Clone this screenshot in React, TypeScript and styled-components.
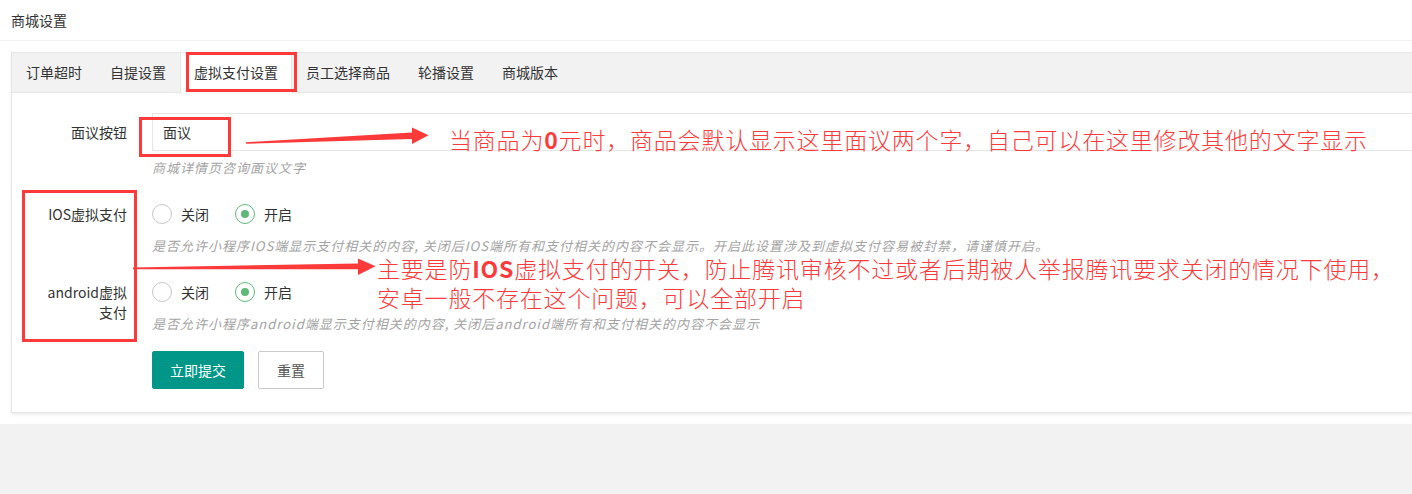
import React from "react";
import styled, { createGlobalStyle } from "styled-components";

const GlobalStyle = createGlobalStyle`
  html, body {
    margin: 0;
    padding: 0;
    background: #f2f2f2;
    overflow: hidden;
  }
  body {
    font-family: "Noto Sans CJK SC", "Noto Sans", "Liberation Sans", sans-serif;
    font-size: 14px;
    color: #333;
  }
  * {
    box-sizing: border-box;
  }
`;

const Page = styled.div`
  position: relative;
  width: 1440px;
  background: #fff;
  padding-bottom: 11px;
`;

const Header = styled.div`
  height: 41px;
  line-height: 40px;
  padding: 0 11px;
  font-size: 14px;
  color: #333;
  border-bottom: 1px solid #f2f2f2;
`;

const Card = styled.div`
  margin: 11px 0 0 11px;
  border: 1px solid #e6e6e6;
  border-right: none;
  background: #fff;
  box-shadow: 0 2px 3px rgba(0, 0, 0, 0.07);
`;

const TabBar = styled.ul`
  display: flex;
  margin: 0;
  padding: 0;
  list-style: none;
  height: 40px;
  background: #f2f2f2;
  border-bottom: 1px solid #e6e6e6;
`;

const Tab = styled.li<{ $active?: boolean }>`
  height: ${(p) => (p.$active ? "40px" : "39px")};
  line-height: 39px;
  padding: 0 14px;
  font-size: 14px;
  color: #333;
  white-space: nowrap;
  background: ${(p) => (p.$active ? "#fff" : "transparent")};
  box-shadow: ${(p) =>
    p.$active ? "inset 1px 0 #e6e6e6, inset -1px 0 #e6e6e6" : "none"};
`;

const Body = styled.div`
  padding: 20px 0 23px;
`;

const FormItem = styled.div`
  display: flex;
  align-items: flex-start;
  margin-bottom: 17px;
`;

const Label = styled.label`
  flex: none;
  width: 86px;
  margin-left: 29px;
  padding: 9px 0;
  line-height: 20px;
  text-align: right;
  font-size: 14px;
  color: #333;
`;

const Field = styled.div`
  flex: 1;
  margin-left: 25px;
  display: flex;
  flex-direction: column;
`;

const TextInput = styled.input`
  height: 38px;
  width: 100%;
  border: 1px solid #e6e6e6;
  padding: 0 10px;
  font-family: inherit;
  font-size: 14px;
  color: #333;
  outline: none;
  background: #fff;
`;

const Hint = styled.div<{ $gap: number }>`
  margin-top: ${(p) => p.$gap}px;
  line-height: 20px;
  font-size: 13px;
  letter-spacing: 1px;
  font-style: italic;
  color: #a3a3a3;
  white-space: nowrap;
`;

const RadioGroup = styled.div`
  display: flex;
  align-items: center;
  height: 38px;
`;

const RadioOption = styled.span`
  display: flex;
  align-items: center;
  margin-right: 26px;
  font-size: 14px;
  color: #333;
`;

const RadioIcon = styled.span<{ $checked?: boolean }>`
  display: flex;
  align-items: center;
  justify-content: center;
  width: 20px;
  height: 20px;
  margin-right: 9px;
  border-radius: 50%;
  border: 1.5px solid ${(p) => (p.$checked ? "#5fb878" : "#c6c6c6")};

  &::after {
    content: "";
    display: ${(p) => (p.$checked ? "block" : "none")};
    width: 8px;
    height: 8px;
    border-radius: 50%;
    background: #5fb878;
  }
`;

const Actions = styled.div`
  display: flex;
  gap: 14px;
  margin-left: 140px;
`;

const Button = styled.button<{ $primary?: boolean }>`
  height: 38px;
  padding: 0 ${(p) => (p.$primary ? "17px" : "18px")};
  border-radius: 2px;
  border: 1px solid ${(p) => (p.$primary ? "#009688" : "#c9c9c9")};
  background: ${(p) => (p.$primary ? "#009688" : "#fff")};
  color: ${(p) => (p.$primary ? "#fff" : "#555")};
  font-family: inherit;
  font-size: 14px;
  cursor: pointer;
`;

const MarkBox = styled.div<{ $x: number; $y: number; $w: number; $h: number }>`
  position: absolute;
  left: ${(p) => p.$x}px;
  top: ${(p) => p.$y}px;
  width: ${(p) => p.$w}px;
  height: ${(p) => p.$h}px;
  border: 3px solid #fd3a3a;
  pointer-events: none;
`;

const Note = styled.div<{ $x: number; $y: number }>`
  position: absolute;
  left: ${(p) => p.$x}px;
  top: ${(p) => p.$y}px;
  font-size: 23px;
  font-weight: 300;
  line-height: 29px;
  letter-spacing: 0.8px;
  color: #fd3a3a;
  white-space: nowrap;
  pointer-events: none;

  b {
    font-weight: 600;
  }
`;

const ArrowLayer = styled.svg`
  position: absolute;
  left: 0;
  top: 0;
  pointer-events: none;
`;

const tabs = ["订单超时", "自提设置", "虚拟支付设置", "员工选择商品", "轮播设置", "商城版本"];

const Radios = () => (
  <RadioGroup>
    <RadioOption>
      <RadioIcon />
      关闭
    </RadioOption>
    <RadioOption>
      <RadioIcon $checked />
      开启
    </RadioOption>
  </RadioGroup>
);

export default function App() {
  return (
    <>
      <GlobalStyle />
      <Page>
        <Header>商城设置</Header>
        <Card>
          <TabBar>
            {tabs.map((t) => (
              <Tab key={t} $active={t === "虚拟支付设置"}>
                {t}
              </Tab>
            ))}
          </TabBar>
          <Body>
            <FormItem>
              <Label>面议按钮</Label>
              <Field>
                <TextInput defaultValue="面议" />
                <Hint $gap={7}>商城详情页咨询面议文字</Hint>
              </Field>
            </FormItem>
            <FormItem>
              <Label>IOS虚拟支付</Label>
              <Field>
                <Radios />
                <Hint $gap={3}>
                  是否允许小程序IOS端显示支付相关的内容, 关闭后IOS端所有和支付相关的内容不会显示。开启此设置涉及到虚拟支付容易被封禁，请谨慎开启。
                </Hint>
              </Field>
            </FormItem>
            <FormItem>
              <Label>android虚拟支付</Label>
              <Field>
                <Radios />
                <Hint $gap={3}>
                  是否允许小程序android端显示支付相关的内容, 关闭后android端所有和支付相关的内容不会显示
                </Hint>
              </Field>
            </FormItem>
            <Actions>
              <Button $primary>立即提交</Button>
              <Button>重置</Button>
            </Actions>
          </Body>
        </Card>

        <MarkBox $x={186} $y={52} $w={111} $h={40} />
        <MarkBox $x={139} $y={117} $w={92} $h={40} />
        <MarkBox $x={22} $y={190} $w={115} $h={152} />

        <ArrowLayer width="1412" height="494" viewBox="0 0 1412 494">
          <polygon
            fill="#fd3a3a"
            points="246,142.2 412,132.6 412,127.5 428.5,135.2 412,144 412,139 246,143.8"
          />
          <polygon
            fill="#fd3a3a"
            points="133,267.6 358,263.4 358,258.5 375.5,266.2 358,275 358,269.2 133,269.2"
          />
        </ArrowLayer>

        <Note $x={449} $y={125}>
          当商品为<b>0</b>元时，商品会默认显示这里面议两个字，自己可以在这里修改其他的文字显示
        </Note>
        <Note $x={377} $y={254}>
          主要是防<b>IOS</b>虚拟支付的开关，防止腾讯审核不过或者后期被人举报腾讯要求关闭的情况下使用，
          <br />
          安卓一般不存在这个问题，可以全部开启
        </Note>
      </Page>
    </>
  );
}
